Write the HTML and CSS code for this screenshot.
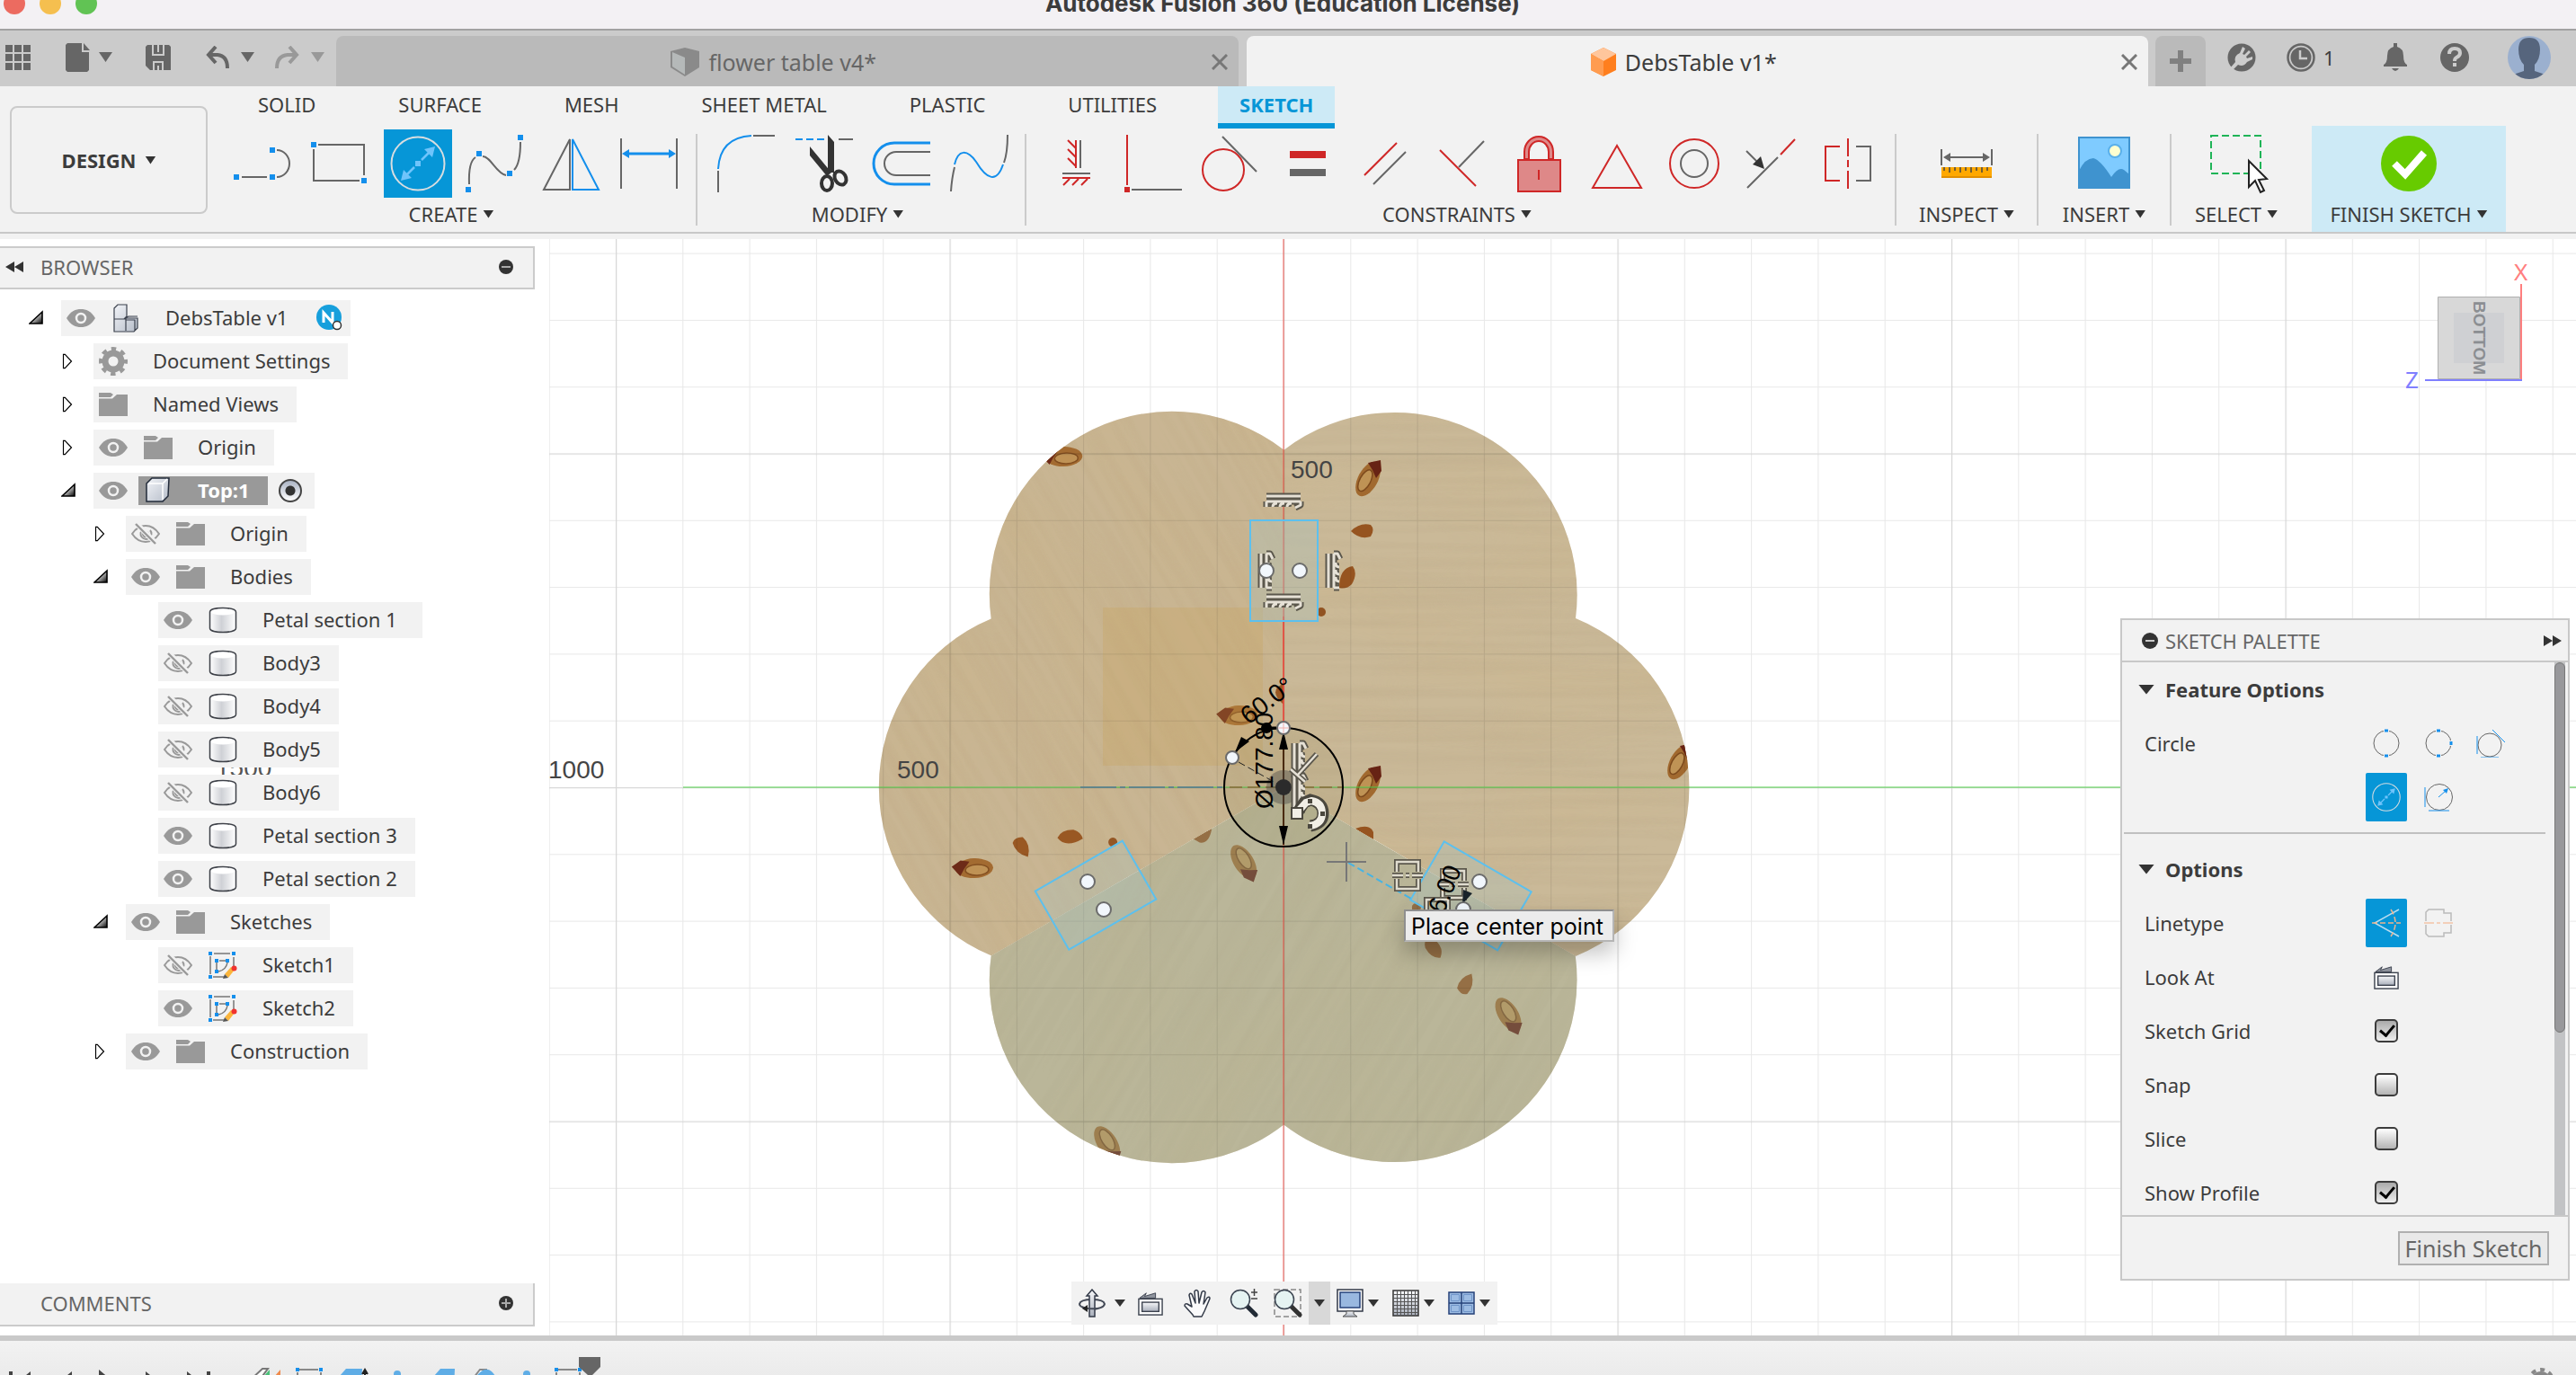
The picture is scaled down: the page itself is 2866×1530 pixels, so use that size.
FILE: index.html
```html
<!DOCTYPE html>
<html lang="en">
<head>
<meta charset="utf-8">
<title>Autodesk Fusion 360 (Education License)</title>
<link rel="stylesheet" href="styles.css">
</head>
<body>
<svg class="defs" aria-hidden="true">
  <defs>
    <linearGradient id="steel" x1="0" y1="0" x2="0" y2="1"><stop offset="0" stop-color="#f7f8fa"/><stop offset="1" stop-color="#a9afbb"/></linearGradient>
    <linearGradient id="steelSide" x1="0" y1="0" x2="1" y2="1"><stop offset="0" stop-color="#f2f4f8"/><stop offset="1" stop-color="#b6bdc9"/></linearGradient>
    <linearGradient id="can" x1="0" y1="0" x2="1" y2="0"><stop offset="0" stop-color="#fff"/><stop offset=".45" stop-color="#cfd1d6"/><stop offset="1" stop-color="#fff"/></linearGradient>
    <linearGradient id="fade" x1="0" y1="0" x2="1" y2="1"><stop offset=".3" stop-color="#fff"/><stop offset="1" stop-color="#000"/></linearGradient>
    <symbol id="eye" viewBox="0 0 32 24"><path fill="#999" d="M0 12C5 4 10 2 16 2s11 2 16 10c-5 8-10 10-16 10S5 20 0 12z"/><circle cx="16" cy="12" r="5" fill="none" stroke="#f2f2f2" stroke-width="2.5"/></symbol>
    <symbol id="eye-off" viewBox="0 0 32 24"><g fill="none" stroke="#999" stroke-width="2"><path d="M1 12C6 4.500 11 3 16 3s10 1.500 15 9c-5 7.500-10 9-15 9S6 19.500 1 12z"/><path d="M21 8a6 6 0 1 1-8-1M18 10a3 3 0 1 1-4 0"/></g><path stroke="#f2f2f2" stroke-width="6" d="M6 1l22 22"/><path stroke="#999" stroke-width="2.400" d="M5 1l22 22"/></symbol>
    <symbol id="folder" viewBox="0 0 32 26"><path fill="#999" d="M0 0h13l3 2-3 3H0zM0 6.500h15L20 2h12v24H0z"/></symbol>
    <symbol id="body" viewBox="0 0 32 30"><path fill="url(#can)" stroke="#3d4047" stroke-width="1.500" d="M1.500 6v18c0 6 29 6 29 0V6c0-6-29-6-29 0z"/><ellipse cx="16" cy="6" rx="13" ry="3.500" fill="#fff"/></symbol>
    <symbol id="sketch" viewBox="0 0 32 32"><g fill="none" stroke="#777" stroke-width="1.500"><path d="M2 6v20M5 29h12M6 3h18M28 7v12"/><path d="M9 13v8M12 11h8M21 13c-1 6-5 9-10 10"/></g><path fill="#148fec" d="M0 1h4v4H0zM26 1h4v4h-4zM0 27h4v4H0zM7 9h4v4H7zM19 9h4v4h-4zM7 21h4v4H7z"/><path fill="#fbb53c" d="M18 26l7-8 4 3-7 9z"/><path fill="#555" d="M16 31l2-5 4 4z"/><circle cx="28.500" cy="19.500" r="3" fill="#f0332f"/></symbol>
    <symbol id="twist-open" viewBox="0 0 16 16"><path fill="url(#fade)" stroke="#000" stroke-width="1.600" d="M1 15L15 2v13z"/></symbol>
    <symbol id="twist-closed" viewBox="0 0 14 20"><path fill="#fff" stroke="#000" stroke-width="1.300" d="M2 1.500h2l8 8.500-8 8.500H2z"/></symbol>
    <symbol id="lookat" viewBox="0 0 30 32"><path fill="#8f949e" stroke="#3b414d" stroke-width="1" d="M2 10l8-6-2 4 13-4v6z"/><rect x="1" y="11" width="28" height="19" fill="#fff" stroke="#3b414d" stroke-width="1.500"/><rect x="5" y="15" width="20" height="11" fill="url(#steel)" stroke="#3b414d" stroke-width="1.500"/></symbol>
    <symbol id="diameter" viewBox="0 0 62 62"><circle cx="31" cy="31" r="29.500" fill="none" stroke="#d8dde0" stroke-width="2"/><g stroke="#6fc4fb" stroke-width="2.500" fill="#6fc4fb"><path d="M19 43l8-8M35 27l8-8"/><path stroke="none" d="M12 50l3-12 9 9zM50 12l-3 12-9-9zM28 28h6v6h-6z"/></g></symbol>
    <symbol id="hatch" viewBox="-24 -11 48 22"><g fill="none" stroke-linejoin="round"><path stroke="#5b574c" stroke-width="7" d="M-19-5h38M-19 1h38M-19 1v6M-12 7q0-4 5-4M-4 7q0-4 5-4M4 7q0-4 5-4M19 1v4l-6 3"/><path stroke="#e6e1d6" stroke-width="3" d="M-19-5h38M-19 1h38M-19 1v6M-12 7q0-4 5-4M-4 7q0-4 5-4M4 7q0-4 5-4M19 1v4l-6 3"/></g></symbol>
    <symbol id="sym" viewBox="-20 -20 40 40"><g fill="none"><path stroke="#5b574c" stroke-width="6" d="M-12-4v-11h24v11M-12 4v11h24V4M-17 0H-5M-2 0h4M5 0h12"/><path stroke="#e0dccf" stroke-width="2.500" d="M-12-4v-11h24v11M-12 4v11h24V4M-17 0H-5M-2 0h4M5 0h12"/></g></symbol>
    <filter id="grain" x="0" y="0" width="1" height="1"><feTurbulence type="fractalNoise" baseFrequency=".003 .09" numOctaves="3" seed="7"/><feColorMatrix values="0 0 0 0 .46  0 0 0 0 .36  0 0 0 0 .22  1.200 0 0 0 -.48"/></filter>
    <filter id="cloud" x="0" y="0" width="1" height="1"><feTurbulence type="fractalNoise" baseFrequency=".004 .011" numOctaves="2" seed="12"/><feColorMatrix values="0 0 0 0 .62  0 0 0 0 .47  0 0 0 0 .25  1.400 0 0 0 -.55"/></filter>
    <clipPath id="wedge"><path d="M0 0V-375A203 203 0 0 1 325-188A203 203 0 0 1 325 188Z"/></clipPath>
    <g id="knot"><ellipse rx="11" ry="21" fill="#a1692f" transform="rotate(28)"/><ellipse rx="6" ry="13" cx="-2" cy="3" fill="#bf9355" stroke="#7d4a1d" stroke-width="1.500" transform="rotate(28)"/><path fill="#672314" d="M0-18l14-3 1 12-6 8-4-9z"/></g>
    <g id="plank" clip-path="url(#wedge)">
      <rect y="-430" width="460" height="620" fill="#cab998"/>
      <rect y="-430" width="460" height="620" filter="url(#cloud)" opacity=".5"/>
      <rect y="-430" width="460" height="620" filter="url(#grain)" opacity=".35"/>
      <use href="#knot" x="94" y="-343"/><use href="#knot" x="94" y="-3"/><use href="#knot" x="441" y="-28"/>
      <path fill="#965420" d="M75-285q10-10 22-7 5 5 0 13-12 4-22-6zM62-222q0-22 15-24 6 8-1 20-6 6-14 4z"/>
      <circle cx="42" cy="-195" r="5" fill="#915322"/><path fill="#965420" d="M80 46q16-6 20 4v10z"/>
    </g>
    <pattern id="minor" width="74.300" height="74.300" patternUnits="userSpaceOnUse"><path d="M0 0H75M0 0V75" stroke="#000" stroke-opacity=".09" stroke-width="2" fill="none"/></pattern>
    <pattern id="major" width="371.500" height="371.500" patternUnits="userSpaceOnUse"><path d="M0 0H372M0 0V372" stroke="#000" stroke-opacity=".07" stroke-width="3" fill="none"/></pattern>
  </defs>
</svg>

<header class="titlebar">
  <div class="lights"><span class="light red"></span><span class="light amber"></span><span class="light green"></span></div>
  <h1>Autodesk Fusion 360 (Education License)</h1>
</header>

<div class="tabbar">
  <div class="quick">
    <button aria-label="Data panel"><svg width="28" height="28"><path fill="#666" d="M0 0h8v8H0zM10 0h8v8h-8zM20 0h8v8h-8zM0 10h8v8H0zM10 10h8v8h-8zM20 10h8v8h-8zM0 20h8v8H0zM10 20h8v8h-8zM20 20h8v8h-8z"/></svg></button>
    <button class="file" aria-label="File"><svg width="52" height="32"><path fill="#666" d="M2 0h16v10h8v20l-2 2H2l-2-2V2zM20 0l7 8h-7zM37 10h15l-7.500 11z"/></svg></button>
    <button class="save" aria-label="Save"><svg width="28" height="28"><path fill="#666" fill-rule="evenodd" d="M2 0h5v12h14V0h5l2 2v26H20V18H8v10H5l-5-5V2zM9 0h4v8h2V0h4v10H9zM10 20h8v8h-3v-5h-2v5h-3z"/></svg></button>
    <button class="undo" aria-label="Undo"><svg width="54" height="26"><path fill="none" stroke="#666" stroke-width="4" d="M11 1L3 10l8 9M4 10h9q11 1 11 15"/><path fill="#666" d="M39 7h15l-7.500 11z"/></svg></button>
    <button class="redo" aria-label="Redo" disabled><svg width="56" height="26"><path fill="none" stroke="#999" stroke-width="4" d="M16 1l8 9-8 9M23 10h-9Q2 11 2 25"/><path fill="#999" d="M40 7h15l-7.500 11z"/></svg></button>
  </div>
  <div class="doc-tab">
    <a href="#flower"><svg width="32" height="32"><path fill="#8a8a8a" d="M16 0l16 4v18L16 32 0 22V4z"/><path fill="#b5b9b9" d="M2 5l14 6v19L2 21z"/></svg>flower table v4*</a>
    <button aria-label="Close flower table"><svg width="18" height="18"><path d="M1 1l16 16M17 1L1 17" stroke="#777" stroke-width="3"/></svg></button>
  </div>
  <div class="doc-tab active">
    <a href="#debs"><svg width="28" height="32"><path fill="#ff7f1e" d="M14 0l14 7v18l-14 7L0 25V7z"/><path fill="#ffc69c" d="M14 0l14 7-14 8L0 7z"/><path fill="#ff9c50" d="M0 7l14 8v17L0 25z"/></svg>DebsTable v1*</a>
    <button aria-label="Close DebsTable"><svg width="18" height="18"><path d="M1 1l16 16M17 1L1 17" stroke="#777" stroke-width="3"/></svg></button>
  </div>
  <button class="new-tab" aria-label="New design"><svg width="24" height="24"><path fill="#808080" d="M9 0h6v9h9v6h-9v9H9v-9H0V9h9z"/></svg></button>
  <div class="status">
    <button aria-label="Extensions"><svg width="32" height="32"><circle cx="16" cy="16" r="15.500" fill="#666"/><path fill="#ccc" d="M17 4l3 2-3 6 2 1 5-5 2 2-5 5 1 2 6-2v3l-6 3q-4 6-10 3l-6 6-3-2 6-7q-2-7 5-10z"/></svg></button>
    <button class="jobs" aria-label="Job status"><svg width="32" height="32"><circle cx="16" cy="16" r="14.500" fill="none" stroke="#666" stroke-width="2.500"/><circle cx="16" cy="16" r="11.500" fill="#666"/><path fill="none" stroke="#ccc" stroke-width="2.500" d="M15 8v9h8"/></svg>1</button>
    <button class="bell" aria-label="Notifications"><svg width="26" height="32"><path fill="#666" d="M11 0h4v4q7 2 7 10 0 8 4 10v2H0v-2q4-2 4-10 0-8 7-10zM9 28h8q-4 6-8 0z"/></svg></button>
    <button class="help" aria-label="Help"><svg width="32" height="32"><circle cx="16" cy="16" r="16" fill="#666"/><path fill="none" stroke="#ccc" stroke-width="4" d="M10 12q0-6 6-6t6 5q0 3-4 5-2 1-2 4"/><path fill="#ccc" d="M14 22h4v4h-4z"/></svg></button>
    <button class="avatar" aria-label="Account"><svg width="48" height="48"><clipPath id="av"><circle cx="24" cy="24" r="24"/></clipPath><g clip-path="url(#av)"><path fill="#9bb0cf" d="M0 0h48v48H0z"/><path fill="#56657d" d="M24 2q12 0 12 13 0 11-6 17v7l12 4v8H6v-8l12-4v-7q-6-6-6-17Q12 2 24 2z"/></g></svg></button>
  </div>
</div>

<div class="toolbar">
  <button class="workspace-switch">DESIGN<i class="caret"></i></button>
  <div class="ribbon">
    <nav class="ribbon-tabs">
      <a href="#solid">SOLID</a><a href="#surface">SURFACE</a><a href="#mesh">MESH</a><a href="#sheet">SHEET METAL</a><a href="#plastic">PLASTIC</a><a href="#utilities">UTILITIES</a><a href="#sketch" class="current">SKETCH</a>
    </nav>
    <div class="groups">
      <section class="group">
        <div class="tools">
          <button aria-label="Line"><svg viewBox="0 0 86 76"><path class="g" d="M19 53H47M58 23A14 15 0 0 1 58 53"/><path fill="#148fec" d="M10 50h6v6h-6zM50 50h6v6h-6zM50 20h6v6h-6z"/></svg></button>
          <button aria-label="Rectangle"><svg viewBox="0 0 86 76"><path class="g" d="M18 17H69V51M13 22V57H64"/><path fill="#148fec" d="M10 14h6v6h-6zM66 54h6v6h-6z"/></svg></button>
          <button class="on" aria-label="Circle"><svg viewBox="0 0 86 76"><use href="#diameter" x="12" y="7" width="62" height="62"/></svg></button>
          <button aria-label="Spline"><svg viewBox="0 0 86 76"><path class="g" d="M14 61Q13 36 21 31M29 30C38 30 44 49 55 51M64 45Q71 38 71 14"/><path fill="#148fec" d="M68 6h6v6h-6zM22 24h6v6h-6zM56 46h6v6h-6zM10 64h6v6h-6z"/></svg></button>
          <button aria-label="Mirror"><svg viewBox="0 0 86 76"><path class="g" d="M11 67H40V11z"/><path class="b" d="M43 67H72L43 11z"/></svg></button>
          <button aria-label="Sketch dimension"><svg viewBox="0 0 86 76"><path class="g" d="M11 10V66M73 10V66"/><path stroke="#148fec" stroke-width="3" d="M16 27H68"/><path fill="#148fec" d="M12 27l8-5v10zM72 27l-8-5v10z"/></svg></button>
        </div>
        <button class="group-name">CREATE<i class="caret"></i></button>
      </section>
      <section class="group">
        <div class="tools">
          <button aria-label="Fillet"><svg viewBox="0 0 86 76"><path class="g" d="M11 70V46M50 7H74"/><path class="b" d="M11 44Q13 9 48 7"/></svg></button>
          <button aria-label="Trim"><svg viewBox="0 0 86 76"><path class="b" stroke-dasharray="8 4" d="M11 11H43"/><path class="g" d="M59 11H75"/><path fill="#333" d="M47 6l7 8v34h-7zM27 19l24 29-5 4-19-23z"/><g fill="none" stroke="#333" stroke-width="4"><ellipse cx="46" cy="60" rx="6" ry="8"/><ellipse cx="61" cy="54" rx="6" ry="8" transform="rotate(-30 61 54)"/></g></svg></button>
          <button aria-label="Offset"><svg viewBox="0 0 86 76"><path stroke="#148fec" stroke-width="3" fill="none" d="M75 15H35A23 23 0 0 0 35 61H75"/><path class="g" d="M75 25H37A13 13 0 0 0 37 51H75"/></svg></button>
          <button aria-label="Curvature"><svg viewBox="0 0 86 76"><path class="g" d="M12 69Q13 54 16 42M71 37Q75 26 75 6"/><path class="b" d="M16 39C20 22 30 22 40 36C52 56 63 60 70 39"/></svg></button>
        </div>
        <button class="group-name">MODIFY<i class="caret"></i></button>
      </section>
      <section class="group">
        <div class="tools">
          <button aria-label="Horizontal/Vertical"><svg viewBox="0 0 86 76"><path class="r" d="M43 12V43M34 12l9 9M34 22l9 9M34 32l9 9M28 54H59M36 55l-7 7M46 55l-7 7M56 55l-7 7"/><path class="g" d="M48 12V43M28 49H59"/></svg></button>
          <button aria-label="Coincident"><svg viewBox="0 0 86 76"><path class="r" d="M14 6V62"/><path fill="#cf2727" d="M11 64h6v6h-6z"/><path class="g" d="M19 67H75"/></svg></button>
          <button aria-label="Tangent"><svg viewBox="0 0 86 76"><circle class="r" cx="35" cy="45" r="23"/><path class="g" d="M34 8L72 47"/></svg></button>
          <button aria-label="Equal"><svg viewBox="0 0 86 76"><path fill="#cf2727" d="M23 24h40v8H23z"/><path fill="#666" d="M23 44h40v8H23z"/></svg></button>
          <button aria-label="Parallel"><svg viewBox="0 0 86 76"><path class="r" d="M20 51L56 15"/><path class="g" d="M30 61L66 25"/></svg></button>
          <button aria-label="Perpendicular"><svg viewBox="0 0 86 76"><path class="r" d="M18 23L58 63"/><path class="g" d="M39 42L67 13"/></svg></button>
          <button aria-label="Fix"><svg viewBox="0 0 86 76"><path fill="#de8888" stroke="#cf2727" stroke-width="2" d="M19 34h47v35H19zM26 33V25A16 17 0 0 1 58 25V33H53V25A11 12 0 0 0 31 25V33z"/><path class="r" d="M42 45V56"/></svg></button>
          <button aria-label="Midpoint"><svg viewBox="0 0 86 76"><path class="r" d="M43 18L16 65H70z"/></svg></button>
          <button aria-label="Concentric"><svg viewBox="0 0 86 76"><circle class="r" cx="43" cy="38" r="27"/><circle class="g" cx="43" cy="38" r="15"/></svg></button>
          <button aria-label="Collinear"><svg viewBox="0 0 86 76"><path class="r" d="M69 11L53 28"/><path class="g" d="M50 31L16 65M15 24L28 37"/><path fill="#333" d="M35 44l-13-5 9-9z"/></svg></button>
          <button aria-label="Symmetry"><svg viewBox="0 0 86 76"><path class="r" d="M33 19H17V57H33M42 10V30M42 34V42M42 46V66"/><path class="g" d="M51 19H67V57H51"/></svg></button>
        </div>
        <button class="group-name">CONSTRAINTS<i class="caret"></i></button>
      </section>
      <section class="group single inspect">
        <div class="tools"><button aria-label="Measure"><svg viewBox="0 0 86 76"><path class="g" d="M15 22V40M71 22V40M20 31H66"/><path fill="#666" d="M17 31l8-5v10zM69 31l-8-5v10z"/><path fill="#ffa800" d="M15 42h56v12H15z"/><path fill="#e08e00" d="M15 52h56v2H15z"/><path stroke="#444" stroke-width="1.500" d="M18 42v4M24 42v6M30 42v4M36 42v6M42 42v4M48 42v6M54 42v4M60 42v6M66 42v4"/></svg></button></div>
        <button class="group-name">INSPECT<i class="caret"></i></button>
      </section>
      <section class="group single insert">
        <div class="tools"><button aria-label="Insert image"><svg viewBox="0 0 86 76"><path fill="#7fcbff" stroke="#3f93cf" stroke-width="2" d="M15 9h56v56H15z"/><path fill="#3f93cf" d="M15 46q7-14 16-14 8 2 20 21 8-12 14-8l6 5v16H15z"/><circle cx="55" cy="24" r="7" fill="#ffffd0" stroke="#5ab0ea" stroke-width="2"/></svg></button></div>
        <button class="group-name">INSERT<i class="caret"></i></button>
      </section>
      <section class="group single select">
        <div class="tools"><button aria-label="Select"><svg viewBox="0 0 86 76"><path fill="none" stroke="#1fb457" stroke-width="2" stroke-dasharray="8 4" d="M15 7h55v42H15z"/><path fill="#fff" stroke="#222" stroke-width="2" d="M57 35l20 20-9 1 6 12-4 2-6-13-7 7z"/></svg></button></div>
        <button class="group-name">SELECT<i class="caret"></i></button>
      </section>
      <section class="group single finish">
        <div class="tools"><button aria-label="Finish sketch"><svg viewBox="0 0 86 76"><circle cx="43" cy="38" r="31" fill="#67cb00"/><path fill="none" stroke="#fff" stroke-width="8" d="M27 38l12 12 21-24"/></svg></button></div>
        <button class="group-name">FINISH SKETCH<i class="caret"></i></button>
      </section>
    </div>
  </div>
</div>

<main class="workspace">
  <aside class="browser">
    <div class="panel-head"><svg width="20" height="12"><path fill="#333" d="M10 0v12L0 6zM20 0v12L10 6z"/></svg><h2>BROWSER</h2><button aria-label="Collapse browser"><svg width="16" height="16"><circle cx="8" cy="8" r="8" fill="#333"/><path fill="#aaa" d="M3 7h10v2H3z"/></svg></button></div>
    <span class="axis-label">1500</span>
    <ul class="tree">
      <li class="l0"><svg class="tw"><use href="#twist-open" width="16" height="16"/></svg><div class="node root"><svg class="eye"><use href="#eye"/></svg><svg class="ic"><path fill="url(#steelSide)" stroke="#3b414d" stroke-width="1.200" d="M3 5l4-4h10v13l-2 2h14v11l-4 4H3zM3 17h13v13M15 16l4-2h10M16 18h10v12"/></svg><span>DebsTable v1</span><svg class="badge" width="30" height="30"><circle cx="14" cy="14" r="14" fill="#169fdc"/><path fill="none" stroke="#fff" stroke-width="3" d="M8 20V9l10 11V8"/><circle cx="23" cy="23" r="4.500" fill="#fff" stroke="#333" stroke-width="1.500"/></svg></div></li>
      <li class="l1"><svg class="tw"><use href="#twist-closed" width="14" height="18"/></svg><div class="node"><svg class="ic"><circle cx="16" cy="16" r="9" fill="none" stroke="#999" stroke-width="7"/><circle cx="16" cy="16" r="14" fill="none" stroke="#999" stroke-width="4" stroke-dasharray="5.500 5.500" stroke-dashoffset="2.700"/></svg><span>Document Settings</span></div></li>
      <li class="l1"><svg class="tw"><use href="#twist-closed" width="14" height="18"/></svg><div class="node"><svg class="ic"><use href="#folder"/></svg><span>Named Views</span></div></li>
      <li class="l1"><svg class="tw"><use href="#twist-closed" width="14" height="18"/></svg><div class="node"><svg class="eye"><use href="#eye"/></svg><svg class="ic"><use href="#folder"/></svg><span>Origin</span></div></li>
      <li class="l1"><svg class="tw"><use href="#twist-open" width="16" height="16"/></svg><div class="node top"><svg class="eye"><use href="#eye"/></svg><div class="picked"><svg class="ic"><path fill="url(#steelSide)" stroke="#222b3a" stroke-width="1.500" d="M3 8l6-6h19l-1 20-6 6H3z"/><path fill="none" stroke="#fff" stroke-width="1.500" d="M5 8h16v18M21 8l5-5"/></svg><b>Top:1</b></div><input type="radio" checked aria-label="Activate Top:1"></div></li>
      <li class="l2"><svg class="tw"><use href="#twist-closed" width="14" height="18"/></svg><div class="node"><svg class="eye"><use href="#eye-off"/></svg><svg class="ic"><use href="#folder"/></svg><span>Origin</span></div></li>
      <li class="l2"><svg class="tw"><use href="#twist-open" width="16" height="16"/></svg><div class="node"><svg class="eye"><use href="#eye"/></svg><svg class="ic"><use href="#folder"/></svg><span>Bodies</span></div></li>
      <li class="l3"><div class="node wide"><svg class="eye"><use href="#eye"/></svg><svg class="ic"><use href="#body"/></svg><span>Petal section 1</span></div></li>
      <li class="l3"><div class="node"><svg class="eye"><use href="#eye-off"/></svg><svg class="ic"><use href="#body"/></svg><span>Body3</span></div></li>
      <li class="l3"><div class="node"><svg class="eye"><use href="#eye-off"/></svg><svg class="ic"><use href="#body"/></svg><span>Body4</span></div></li>
      <li class="l3"><div class="node"><svg class="eye"><use href="#eye-off"/></svg><svg class="ic"><use href="#body"/></svg><span>Body5</span></div></li>
      <li class="l3"><div class="node"><svg class="eye"><use href="#eye-off"/></svg><svg class="ic"><use href="#body"/></svg><span>Body6</span></div></li>
      <li class="l3"><div class="node"><svg class="eye"><use href="#eye"/></svg><svg class="ic"><use href="#body"/></svg><span>Petal section 3</span></div></li>
      <li class="l3"><div class="node"><svg class="eye"><use href="#eye"/></svg><svg class="ic"><use href="#body"/></svg><span>Petal section 2</span></div></li>
      <li class="l2"><svg class="tw"><use href="#twist-open" width="16" height="16"/></svg><div class="node"><svg class="eye"><use href="#eye"/></svg><svg class="ic"><use href="#folder"/></svg><span>Sketches</span></div></li>
      <li class="l3"><div class="node"><svg class="eye"><use href="#eye-off"/></svg><svg class="ic"><use href="#sketch"/></svg><span>Sketch1</span></div></li>
      <li class="l3"><div class="node"><svg class="eye"><use href="#eye"/></svg><svg class="ic"><use href="#sketch"/></svg><span>Sketch2</span></div></li>
      <li class="l2"><svg class="tw"><use href="#twist-closed" width="14" height="18"/></svg><div class="node"><svg class="eye"><use href="#eye"/></svg><svg class="ic"><use href="#folder"/></svg><span>Construction</span></div></li>
    </ul>
    <div class="panel-head comments"><h2>COMMENTS</h2><button aria-label="Expand comments"><svg width="16" height="16"><circle cx="8" cy="8" r="8" fill="#333"/><path fill="#aaa" d="M3 7h10v2H3zM7 3h2v10H7z"/></svg></button></div>
  </aside>

  <div class="viewport">
    <svg class="model">
      <svg x="817" y="50%" overflow="visible">
        <use href="#plank"/>
        <use href="#plank" transform="rotate(120)"/>
        <use href="#plank" transform="rotate(240)"/>
        <g transform="rotate(120)"><path clip-path="url(#wedge)" d="M0-430H460V200H0z" fill="#96b09d" fill-opacity=".3"/></g>
        <g transform="rotate(240)"><path clip-path="url(#wedge)" d="M0-430H460V200H0z" fill="#c09050" fill-opacity=".07"/></g>
        <path fill="#c8a050" fill-opacity=".24" d="M-201-200H-23V-24H-201z"/>
        <rect x="-1486" y="-1486" width="5201" height="2972" fill="url(#minor)"/>
        <rect x="-1486" y="-1486" width="5201" height="2972" fill="url(#major)"/>
        <path stroke="#f0473f" stroke-opacity=".45" stroke-width="2" d="M0-1000V1000"/>
        <path stroke="#4fd04a" stroke-opacity=".5" stroke-width="2" d="M-668 0H3000"/>
        <path stroke="#e8483c" stroke-width="2" d="M0-190V-66" opacity=".7"/>
        <path stroke="#54709a" stroke-width="2" stroke-dasharray="40 4 6 4" opacity=".7" d="M-226 0H-66"/>
        <path stroke="#8c6a3c" stroke-width="2" stroke-dasharray="14 6" opacity=".8" d="M-60 0H66"/>
        <g fill="#a8c4c4" fill-opacity=".32" stroke="#5cc0ee" stroke-width="2">
          <path d="M-37-297H38V-185H-37z"/><path transform="rotate(120)" d="M-37-297H38V-185H-37z"/><path transform="rotate(240)" d="M-37-297H38V-185H-37z"/>
        </g>
        <path stroke="#46b4e4" stroke-width="2" stroke-dasharray="8 4" d="M72 84L142 124"/>
        <g class="axis-text"><text x="8" y="-344">500</text><text x="-430" y="-10">500</text><text x="-818" y="-10">1000</text></g>
        <use href="#hatch" x="-24" y="-330" width="48" height="22"/><use href="#hatch" x="-24" y="-218" width="48" height="22"/>
        <g transform="translate(-20 -241) rotate(-90)"><use href="#hatch" x="-24" y="-11" width="48" height="22"/></g>
        <g transform="translate(55 -241) rotate(-90)"><use href="#hatch" x="-24" y="-11" width="48" height="22"/></g>
        <circle r="66" fill="#8a8450" fill-opacity=".12" stroke="#000" stroke-width="2"/>
        <path stroke="#4a2a10" stroke-width="2" d="M0-60V64"/>
        <path stroke="#222" stroke-dasharray="8 4" d="M-50-28L0 0"/>
        <path d="M0-62l5 20H-5zM0 64l5-21H-5zM-54-39l7-17 9 5z"/><circle cx="-19" cy="-66" r="6"/><path stroke="#000" stroke-width="3" d="M-19-66H-8"/>
        <circle r="19" fill="#444" fill-opacity=".4"/><circle r="9" fill="#2b2b2b"/>
        <g class="dims"><text transform="translate(-12 24) rotate(-90)">Ø177.80</text><text transform="translate(-39 -69) rotate(-37)">60.0°</text></g>
        <g transform="translate(17 -30) rotate(-90)"><use href="#hatch" x="-24" y="-11" width="48" height="22"/></g>
        <g transform="translate(17 6) rotate(-90)"><use href="#hatch" x="-24" y="-11" width="48" height="22"/></g>
        <path stroke="#5b574c" stroke-width="6" d="M8-20l16 14M16-14L37-37"/><path stroke="#e6e1d6" stroke-width="2.500" d="M8-20l16 14M16-14L37-37"/>
        <path fill="none" stroke="#4a473e" stroke-width="13" d="M15 29l8-12 7-3q14 3 14 15t-14 14"/><path fill="none" stroke="#f1eee6" stroke-width="8" d="M17 26l8-9 6-2q12 2 12 14t-14 14"/><path fill="#f1eee6" stroke="#4a473e" stroke-width="2" d="M9 23h12v12H9z"/><path fill="#4a473e" d="M27 13h5v5h-5zM41 27h5v5h-5zM27 41h5v5h-5z"/>
        <use href="#sym" x="118" y="78" width="40" height="40"/><use href="#sym" x="169" y="88" width="40" height="40"/><use href="#sym" x="151" y="120" width="40" height="40"/>
        <g class="dims"><text transform="translate(178 142) rotate(-68)">6.00</text></g>
        <path fill="#18222a" d="M200 114l10 4-11 12z"/>
        <g fill="#f2f7fc" stroke="#6b6b6b" stroke-width="2">
          <circle cx="-19" cy="-241" r="8"/><circle cx="18" cy="-241" r="8"/><circle cx="218" cy="105" r="8"/><circle cx="200" cy="136" r="8"/><circle cx="-218" cy="105" r="8"/><circle cx="-200" cy="136" r="8"/><circle cy="-66" r="7"/><circle cx="-57" cy="-33" r="7"/>
        </g>
        <path stroke="#f3b0aa" d="M0-72v12M-6-66h12"/>
        <path stroke="#777" stroke-width="2" d="M48 83H92M70 61V105"/>
      </svg>
    </svg>

    <svg class="viewcube" width="140" height="150">
      <path fill="#d8d8d8" stroke="#b0b0b0" d="M36.500 41.500h91v91h-91z"/><path fill="#cfd0d3" d="M54 59h56v56H54z"/>
      <path stroke="#ff7f7f" stroke-width="2" d="M129 27V134"/><path stroke="#7f7fff" stroke-width="2" d="M22 134H130"/>
      <text class="x" x="121" y="23">X</text><text class="z" x="0" y="143">Z</text>
      <text class="face" text-anchor="middle" transform="translate(76 87) rotate(90)">BOTTOM</text>
    </svg>

    <div class="tooltip" role="tooltip">Place center point</div>

    <section class="palette">
      <header><button aria-label="Collapse palette"><svg width="18" height="18"><circle cx="9" cy="9" r="9" fill="#333"/><path fill="#ccc" d="M4 8h10v2H4z"/></svg></button><h2>SKETCH PALETTE</h2><svg width="20" height="12"><path fill="#333" d="M0 0v12l10-6zM10 0v12l10-6z"/></svg></header>
      <div class="palette-body">
        <div class="palette-scroll">
          <h3><i class="fold"></i>Feature Options</h3>
          <div class="opt circles"><span>Circle</span>
            <div class="choices">
              <button aria-label="2-point circle"><svg width="32" height="32"><circle class="g thin" cx="16" cy="16" r="14"/><path fill="#148fec" stroke="#f2f2f2" d="M13.500 0h5v4h-5zM13.500 28h5v4h-5z"/></svg></button>
              <button aria-label="3-point circle"><svg width="32" height="32"><circle class="g thin" cx="16" cy="16" r="14"/><path fill="#148fec" stroke="#f2f2f2" d="M13.500 0h5v4h-5zM13.500 28h5v4h-5zM28 13.500h4v5h-4z"/></svg></button>
              <button aria-label="3-tangent circle"><svg width="32" height="32"><circle class="g thin" cx="15" cy="18" r="13"/><path class="b thin" d="M1 8V28M5 32H25M18 1L32 15"/></svg></button>
              <button class="on" aria-label="Center diameter circle"><svg width="32" height="32"><use href="#diameter" width="32" height="32"/></svg></button>
              <button aria-label="2-tangent circle"><svg width="32" height="32"><circle class="g thin" cx="17" cy="16" r="14.500"/><path class="b thin" d="M1 5V27M5 31H28M16 16L24 9"/><path fill="#148fec" d="M27 6l-2 6-4-4z"/></svg></button>
            </div>
          </div>
          <hr>
          <h3><i class="fold"></i>Options</h3>
          <div class="opt"><span>Linetype</span><div class="choices"><button class="on" aria-label="Construction"><svg width="32" height="32"><path fill="none" stroke="#b8dcf0" stroke-width="1.500" d="M30 1L3 16l27 15"/><path fill="none" stroke="#f0b48c" stroke-width="1.500" stroke-dasharray="6 3" d="M0 16H32M21 1q10 15 0 30"/></svg></button><button aria-label="Centerline"><svg width="32" height="32"><path fill="none" stroke="#bbb" stroke-width="1.500" d="M2 14V4l3-3h17v4h8v9M2 18v10l3 3h17v-4h8v-9"/><path stroke="#f4c4a6" stroke-width="1.500" stroke-dasharray="11 3 4 3" d="M0 16H32"/></svg></button></div></div>
          <div class="opt"><span>Look At</span><div class="choices"><button aria-label="Look At"><svg width="28" height="30"><use href="#lookat"/></svg></button></div></div>
          <div class="opt"><label for="grid">Sketch Grid</label><input id="grid" type="checkbox" checked></div>
          <div class="opt"><label for="snap">Snap</label><input id="snap" type="checkbox"></div>
          <div class="opt"><label for="slice">Slice</label><input id="slice" type="checkbox"></div>
          <div class="opt"><label for="profile">Show Profile</label><input id="profile" type="checkbox" checked></div>
        </div>
        <div class="track"><div class="thumb"></div></div>
      </div>
      <footer><button>Finish Sketch</button></footer>
    </section>

    <div class="navbar">
      <button class="orbit" aria-label="Orbit"><svg width="30" height="32"><path fill="none" stroke="#444a57" stroke-width="2" d="M8 22Q1 20 1 17q1-5 14-5t14 5q-1 5-15 6"/><path fill="url(#steel)" stroke="#333a48" stroke-width="1.500" d="M15 1l6 7h-3v23h-6V8H9z"/><path fill="none" stroke="#444a57" stroke-width="2" d="M4 20q5 3 16 2"/><path fill="#222" d="M4 22l6-4v8z"/></svg></button><button class="drop first" aria-label="Orbit options"><i class="tri"></i></button>
      <button class="look" aria-label="Look at"><svg width="28" height="30"><use href="#lookat"/></svg></button>
      <button aria-label="Pan"><svg width="30" height="32"><path fill="#fafafb" stroke="#333a48" stroke-width="1.500" stroke-linejoin="round" d="M10 29L1 19q0-3 3-2l5 3L6 7q1-3 3-1l4 10-1-13q2-3 4 0l1 13 3-12q2-3 4 0l-2 13 4-7q3-2 3 1l-6 14-3 6h-9z"/></svg></button>
      <button aria-label="Zoom"><svg width="32" height="32"><path stroke="#222b36" stroke-width="5" stroke-linecap="round" d="M20 20l9 9"/><circle cx="12" cy="12" r="10.500" fill="#e5f3f2" stroke="#39424f" stroke-width="1.500"/><path stroke="#444" stroke-width="1.500" d="M24 4h7M27.500 0v8M24 11h7"/></svg></button>
      <button class="fit" aria-label="Fit"><svg width="32" height="32"><path fill="none" stroke="#888" stroke-width="1.500" stroke-dasharray="6 3" d="M1 1h29v30H1z"/><path stroke="#333" stroke-width="5" stroke-linecap="round" d="M20 20l9 9"/><circle cx="12" cy="12" r="10.500" fill="#e5f3f2" stroke="#39424f" stroke-width="1.500"/></svg></button><button class="drop dark" aria-label="Fit options"><i class="tri"></i></button>
      <button class="menu" aria-label="Display settings"><svg width="30" height="32"><path fill="#fff" stroke="#333a48" stroke-width="1.500" d="M1 1h28v24H1z"/><path fill="#99b8e0" stroke="#26427a" stroke-width="1.500" d="M4 4h22v17H4z"/><path fill="url(#steel)" stroke="#555" d="M11 25h8v3l4 3H7l4-3z"/></svg></button><button class="drop" aria-label="Display options"><i class="tri"></i></button>
      <button class="menu" aria-label="Grid and snaps"><svg width="30" height="30"><path fill="url(#steel)" stroke="#333" stroke-width="1.500" d="M1 1h28v28H1z"/><path stroke="#555" d="M5.500 1v28M9.500 1v28M13.500 1v28M17.500 1v28M21.500 1v28M25.500 1v28M1 5.500h28M1 9.500h28M1 13.500h28M1 17.500h28M1 21.500h28M1 25.500h28"/></svg></button><button class="drop" aria-label="Grid options"><i class="tri"></i></button>
      <button class="menu" aria-label="Viewports"><svg width="30" height="26"><path fill="#9dbce3" stroke="#26427a" stroke-width="1.500" d="M1 1h28v24H1zM15 1v24M1 13h28"/><path fill="none" stroke="#6f94c8" d="M3.500 3.500h9v7h-9zM17.500 3.500h9v7h-9zM3.500 15.500h9v7h-9zM17.500 15.500h9v7h-9z"/></svg></button><button class="drop last" aria-label="Viewport options"><i class="tri"></i></button>
    </div>
  </div>
</main>

<footer class="timeline">
  <svg class="tl-play" width="240" height="36"><path fill="#444" d="M10 4h4v26h-4zM34 4v26L18 17zM80 4v26L64 17zM110 2v30l18-15zM162 4v26l16-13zM208 4v26l16-13zM230 4h4v26h-4z"/></svg>
  <svg class="tl-items" width="400" height="36">
    <path fill="#fff" stroke="#777" stroke-width="2" d="M4 14l14-13h6L10 20z"/><path fill="#49c078" d="M10 20L26 2v20z"/><path fill="#ef8a4c" d="M24 18L38 2v20z"/>
    <g id="tlsk"><path fill="none" stroke="#888" stroke-width="2" d="M58 2h22M57 5v20M83 5v20"/><path fill="#148fec" d="M55 0h4v4h-4zM81 0h4v4h-4zM62 8h4v4h-4zM74 8h4v4h-4z"/></g><use href="#tlsk" x="288"/>
    <path fill="#5fade6" d="M104 9l7-8h18l-1 22h-24z"/><path stroke="#222" stroke-width="2" d="M132 20V3M129 7l3-5 3 5"/>
    <circle cx="168" cy="7" r="4" fill="#5fade6"/><path fill="#5fade6" d="M158 14h20v10h-20zM209 9l7-8h16l-1 22h-22z"/><path fill="#fff" stroke="#888" stroke-width="2" d="M246 20l14-18h8"/><path fill="#5fade6" d="M254 12q14-20 24-1v14h-24z"/><circle cx="312" cy="7" r="4" fill="#5fade6"/><path fill="#5fade6" d="M302 14h20v10h-20z"/>
  </svg>
  <svg class="tl-mark" width="24" height="34"><path fill="#666" d="M0 0h24v11l-9 9v14h-5V20l-10-9z"/></svg>
  <svg class="tl-gear" width="30" height="30"><circle cx="15" cy="15" r="8" fill="none" stroke="#888" stroke-width="6"/><circle cx="15" cy="15" r="13" fill="none" stroke="#888" stroke-width="4" stroke-dasharray="5 5"/></svg>
</footer>
</body>
</html>
```
FILE: styles.css
```css
* { box-sizing: border-box; }
body {
  margin: 0;
  height: 100vh;
  display: flex;
  flex-direction: column;
  overflow: hidden;
  background: #f2f2f2;
  color: #3c3c3c;
  font: 22px/28px "Noto Sans", "Open Sans", sans-serif;
}
button { border: 0; padding: 0; background: none; color: inherit; font: inherit; }
a { color: inherit; text-decoration: none; }
svg { display: block; flex: none; }
h1, h2, h3, ul { margin: 0; padding: 0; font: inherit; }
.defs { position: absolute; width: 0; height: 0; }
.g, .b, .r { fill: none; stroke-width: 2; }
.g { stroke: #666; }
.b { stroke: #148fec; }
.r { stroke: #cf2727; }
.thin { stroke-width: 1px; }

/* title bar */
.titlebar {
  display: flex;
  flex: none;
  height: 34px;
  overflow: hidden;
  background: #f3f1f4;
  border-bottom: 2px solid #a2a2a2;
}
.lights { display: flex; align-items: center; gap: 16px; height: 8px; width: 160px; padding-left: 4px; }
.light { width: 24px; height: 24px; border-radius: 50%; }
.red { background: #ec6b60; }
.amber { background: #f5bf4f; }
.green { background: #61c354; }
.titlebar h1 { flex: 1; margin-right: 172px; line-height: 8px; text-align: center; font-family: Inter, sans-serif; font-weight: 700; font-size: 26px; }

/* document tabs */
.tabbar { display: flex; flex: none; height: 62px; padding: 6px 28px 0 6px; background: #cbcbcb; }
.quick { display: flex; align-items: center; flex: none; width: 368px; height: 48px; }
.file { margin-left: 39px; }
.save { margin-left: 37px; }
.undo { margin-left: 39px; }
.redo { margin-left: 23px; }
.doc-tab { display: flex; align-items: center; flex: 1; padding: 2px 12px 0 0; background: #bababa; border-radius: 8px 8px 0 0; font-size: 25px; color: #666; }
.doc-tab a { display: flex; align-items: center; justify-content: center; gap: 10px; flex: 1; }
.doc-tab.active { margin-left: 9px; background: #f2f2f2; color: #3c3c3c; }
.new-tab { display: flex; align-items: center; justify-content: center; width: 56px; margin-left: 8px; background: #bababa; border-radius: 8px 8px 0 0; }
.status { display: flex; align-items: center; height: 48px; padding-left: 24px; }
.status button { display: flex; align-items: center; }
.status .jobs { margin-left: 34px; gap: 9px; width: 54px; }
.status .bell { margin-left: 54px; }
.status .help { margin-left: 37px; }
.status .avatar { margin-left: 43px; }

/* ribbon */
.toolbar { display: flex; flex: none; height: 164px; border-bottom: 2px solid #c8c8c8; background: #f2f2f2; }
.workspace-switch { display: flex; align-items: center; justify-content: center; gap: 10px; width: 220px; height: 120px; margin: 22px 7px 0 11px; border: 2px solid #cbcbcb; border-radius: 8px; font-weight: 700; }
.caret { width: 12px; height: 9px; background: #333; clip-path: polygon(0 0, 100% 0, 50% 100%); }
.ribbon { flex: 1; }
.ribbon-tabs { display: flex; gap: 44px; height: 48px; padding-left: 25px; }
.ribbon-tabs a { padding: 6px 24px 0; height: 47px; }
.ribbon-tabs .current { background: #cdeaf6; border-bottom: 6px solid #0696d7; color: #0696d7; font-weight: 700; }
.groups { display: flex; height: 114px; }
.group { position: relative; padding: 0 10px 0 12px; }
.group::after { content: ""; position: absolute; right: 0; top: 5px; width: 2px; height: 102px; background: #cbcbcb; }
.tools { display: flex; justify-content: center; height: 76px; }
.tools svg { width: 86px; height: 76px; }
.tools .on { background: linear-gradient(#0696d7, #0696d7) center / 76px 76px no-repeat; }
.group-name { display: flex; align-items: center; justify-content: center; gap: 6px; width: 100%; height: 36px; padding-right: 12px; }
.single { padding: 0 2px 0 0; }
.single .group-name { padding-right: 0; }
.inspect { width: 158px; }
.insert { width: 148px; }
.select { width: 146px; margin-right: 10px; }
.finish { width: 216px; padding: 4px 0 0; margin-top: -4px; background: #cdeaf6; }
.select::after, .finish::after { display: none; }

/* workspace */
.workspace { display: flex; flex: 1; min-height: 0; border-top: 6px solid #f2f2f2; background: #fff; }
.browser { position: relative; display: flex; flex-direction: column; width: 611px; padding: 8px 16px 10px 0; }
.panel-head { display: flex; align-items: center; height: 48px; padding: 0 22px 2px 6px; background: #f2f2f2; border: 2px solid #cbcbcb; border-left: 0; color: #666; }
.panel-head h2 { flex: 1; margin-left: 19px; }
.comments { margin-top: auto; border-top: 0; padding-left: 26px; }
.axis-label { position: absolute; left: 240px; top: 573px; font: 28px/32px "Liberation Sans", sans-serif; color: #555; }
.tree { position: relative; display: flex; flex-direction: column; gap: 8px; margin-top: 12px; list-style: none; }
.tree li { display: flex; align-items: center; height: 40px; }
.l0 { padding-left: 32px; }
.l1 { padding-left: 68px; }
.l2 { padding-left: 104px; }
.l3 { padding-left: 176px; }
.tw { width: 36px; height: 18px; }
.node { display: flex; align-items: center; gap: 18px; height: 40px; padding: 0 20px 0 6px; background: #f2f2f2; }
.eye { width: 32px; height: 24px; }
.ic { width: 32px; height: 32px; }
.node span, .node b { margin-left: 10px; padding-bottom: 2px; white-space: nowrap; }
.badge { margin-left: 14px; }
.root { padding-right: 8px; }
.wide { padding-right: 28px; }
.top { gap: 12px; padding-right: 14px; }
.picked { display: flex; align-items: center; gap: 18px; height: 32px; padding: 0 20px 0 6px; background: #999; color: #fff; }
input { appearance: none; margin: 0; }
.top input { width: 26px; height: 26px; border: 2px solid #444; border-radius: 50%; background: radial-gradient(#333 0 5px, transparent 6px), linear-gradient(#aab3c4, #fff); }

/* viewport */
.viewport { position: relative; flex: 1; overflow: hidden; }
.model { width: 100%; height: 100%; overflow: hidden; }
.axis-text, .dims { font: 28px "Liberation Sans", sans-serif; fill: #444; }
.dims { fill: #000; }
.viewcube { position: absolute; right: 50px; top: 23px; font: 26px "Noto Sans", sans-serif; }
.x { fill: #ff7f7f; }
.z { fill: #7f7fff; }
.face { font: 700 19px "Liberation Sans Narrow", "Liberation Sans", sans-serif; fill: #8b8e92; }
.tooltip { position: absolute; left: 951px; top: 746px; height: 36px; padding: 0 10px 0 6px; border: 2px solid #a9a9a9; border-color: #8f8f8f #b5b5b5 #b5b5b5 #8f8f8f; background: #ececec; color: #000; font: 25px/34px Inter, sans-serif; box-shadow: 0 12px 24px rgba(0, 0, 0, .25); }

.palette { position: absolute; right: 7px; top: 422px; width: 500px; border: 2px solid #c8c8c8; background: #f2f2f2; }
.palette header { display: flex; align-items: center; height: 47px; padding: 0 7px 0 22px; border-bottom: 2px solid #c8c8c8; color: #666; }
.palette header h2 { flex: 1; margin-left: 8px; }
.palette-body { display: flex; height: 617px; border-bottom: 2px solid #c8c8c8; }
.palette-scroll { flex: 1; overflow: hidden; padding-left: 2px; }
.palette h3 { display: flex; align-items: center; gap: 12px; height: 60px; padding-left: 16px; font-weight: 700; }
.fold { width: 18px; height: 11px; background: #333; clip-path: polygon(0 0, 100% 0, 50% 100%); }
.opt { display: flex; align-items: center; min-height: 60px; padding-left: 23px; }
.opt span, .opt label { width: 246px; }
.circles { align-items: flex-start; height: 120px; line-height: 60px; }
.choices { display: grid; grid-template-columns: repeat(3, 46px); grid-auto-rows: 60px; column-gap: 12px; align-items: center; }
.choices button { display: flex; align-items: center; justify-content: center; height: 54px; }
.choices .on { background: #0696d7; border-radius: 2px; }
.palette hr { margin: 9px 10px 9px 0; border: 0; border-top: 2px solid #c0c0c0; }
.opt input { position: relative; width: 26px; height: 26px; margin-left: 10px; border: 2px solid #3c3c3c; border-radius: 5px; background: linear-gradient(#fff, #b4b4b4); }
.opt input:checked { background: linear-gradient(#aaa, #eee); }
.opt input:checked::after { content: ""; position: absolute; left: 7px; top: 1px; width: 7px; height: 13px; border: solid #000; border-width: 0 3px 3px 0; transform: rotate(40deg); }
.track { width: 12px; margin-right: 3px; background: #c2c3c5; }
.thumb { height: 67%; border: 1px solid #777; border-radius: 6px; background: #98989b; }
.palette footer { display: flex; align-items: center; justify-content: flex-end; height: 69px; padding-right: 21px; }
.palette footer button { width: 168px; height: 38px; border: 2px solid #b0b0b0; background: #e9e9e9; color: #666; font-size: 25px; white-space: nowrap; }

.navbar { position: absolute; left: 581px; bottom: 12px; display: flex; align-items: center; height: 48px; padding-left: 8px; background: #f2f2f2; }
.navbar button { display: flex; justify-content: center; width: 52px; }
.navbar .orbit, .navbar .menu { width: 30px; }
.navbar .drop { align-items: center; width: 22px; height: 48px; margin-right: 10px; }
.navbar .first { width: 32px; margin-right: 0; }
.navbar .look { width: 36px; margin-right: 8px; }
.navbar .fit { width: 46px; }
.navbar .dark { width: 24px; background: #d8d8d8; margin-right: 7px; }
.navbar .last { margin-right: 3px; }
.tri { width: 12px; height: 8px; background: #333; clip-path: polygon(0 0, 100% 0, 50% 100%); }

/* timeline */
.timeline { display: flex; align-items: flex-start; flex: none; height: 44px; overflow: hidden; padding-right: 24px; border-top: 6px solid #c9c9c9; background: linear-gradient(#f2f2f2, #ebebeb); }
.tl-play { margin-top: 30px; }
.tl-items { margin: 30px 0 0 34px; }
.tl-mark { margin: 18px auto 0 -30px; }
.tl-gear { margin-top: 30px; }
```
